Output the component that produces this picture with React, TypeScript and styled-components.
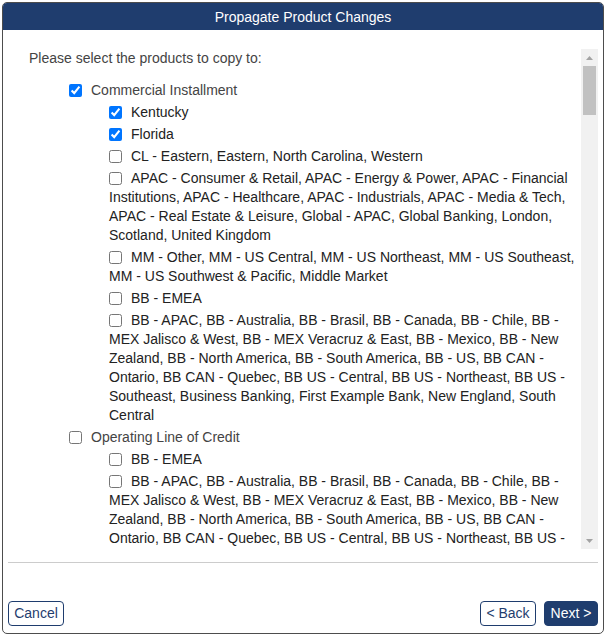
import React from "react";
import styled, { createGlobalStyle } from "styled-components";

const Global = createGlobalStyle`
  html, body { margin: 0; padding: 0; background: #ffffff; }
  body { font-family: "Liberation Sans", Arial, sans-serif; font-size: 14px; color: #333333; }
  * { box-sizing: border-box; }
`;

const Page = styled.div`
  width: 608px;
  height: 637px;
  padding: 2px 0 0 2px;
  background: #ffffff;
`;

const Dialog = styled.div`
  width: 602px;
  height: 632px;
  border: 1px solid #4d4d4d;
  border-radius: 5px;
  overflow: hidden;
  display: flex;
  flex-direction: column;
  background: #ffffff;
`;

const Header = styled.div`
  height: 27px;
  flex: none;
  background: #1f3d6e;
  color: #ffffff;
  font-size: 14px;
  display: flex;
  align-items: center;
  justify-content: center;
`;

const Body = styled.div`
  flex: 1;
  display: flex;
  flex-direction: column;
  padding: 19px 5px 7px 5px;
`;

const ScrollArea = styled.div`
  height: 500px;
  flex: none;
  display: flex;
`;

const Content = styled.div`
  flex: 1;
  min-width: 0;
  overflow: hidden;
  padding: 0 0 0 21px;
  line-height: 19px;
`;

const Track = styled.div`
  width: 17px;
  flex: none;
  background: #f1f1f1;
  display: flex;
  flex-direction: column;
`;

const Arrow = styled.div`
  height: 17px;
  flex: none;
  display: flex;
  align-items: center;
  justify-content: center;
`;

const ThumbRail = styled.div`
  flex: 1;
  padding: 0 2px;
`;

const Thumb = styled.div`
  height: 49px;
  background: #c1c1c1;
`;

const Intro = styled.div`
  line-height: 19px;
  color: #444444;
`;

const List = styled.ul<{ $nested?: boolean }>`
  list-style: none;
  margin: ${(p) => (p.$nested ? "3px 0 0 0" : "13px 0 0 0")};
  padding: 0 0 0 40px;
`;

const Item = styled.li<{ $strong?: boolean }>`
  margin: 0 0 3px 0;
  line-height: 19px;
  color: ${(p) => (p.$strong ? "#222222" : "#444444")};
`;

const Label = styled.label`
  cursor: pointer;
`;

const Box = styled.input.attrs({ type: "checkbox" })`
  width: 13px;
  height: 13px;
  margin: 0 9px 0 0;
  vertical-align: -2px;
`;

const Rule = styled.hr`
  border: none;
  border-top: 1px solid #cccccc;
  margin: 13px 0 0 0;
  height: 0;
`;

const Footer = styled.div`
  margin-top: auto;
  display: flex;
  align-items: center;
  gap: 8px;
`;

const Spacer = styled.div`
  flex: 1;
`;

const Button = styled.button<{ $primary?: boolean; $w: number }>`
  width: ${(p) => p.$w}px;
  height: 25px;
  padding: 0;
  border-radius: 4px;
  border: 1px solid #1f3d6e;
  background: ${(p) => (p.$primary ? "#1f3d6e" : "#ffffff")};
  color: ${(p) => (p.$primary ? "#ffffff" : "#1f3d6e")};
  font-family: "Liberation Sans", Arial, sans-serif;
  font-size: 14px;
  line-height: 23px;
  text-align: center;
  cursor: pointer;
`;

type Product = { name: string; checked?: boolean; children: { name: string; checked?: boolean }[] };

const CL = "CL - Eastern, Eastern, North Carolina, Western";
const APAC =
  "APAC - Consumer & Retail, APAC - Energy & Power, APAC - Financial Institutions, APAC - Healthcare, APAC - Industrials, APAC - Media & Tech, APAC - Real Estate & Leisure, Global - APAC, Global Banking, London, Scotland, United Kingdom";
const MM =
  "MM - Other, MM - US Central, MM - US Northeast, MM - US Southeast, MM - US Southwest & Pacific, Middle Market";
const EMEA = "BB - EMEA";
const BB =
  "BB - APAC, BB - Australia, BB - Brasil, BB - Canada, BB - Chile, BB - MEX Jalisco & West, BB - MEX Veracruz & East, BB - Mexico, BB - New Zealand, BB - North America, BB - South America, BB - US, BB CAN - Ontario, BB CAN - Quebec, BB US - Central, BB US - Northeast, BB US - Southeast, Business Banking, First Example Bank, New England, South Central";

const standard = [EMEA, BB, CL, APAC, MM].map((name) => ({ name }));

const products: Product[] = [
  {
    name: "Commercial Installment",
    checked: true,
    children: [
      { name: "Kentucky", checked: true },
      { name: "Florida", checked: true },
      { name: CL },
      { name: APAC },
      { name: MM },
      { name: EMEA },
      { name: BB },
    ],
  },
  { name: "Operating Line of Credit", children: standard },
  { name: "Term Loan", children: standard },
  { name: "Commercial Real Estate", children: standard },
];

const UpArrow = () => (
  <svg width="7" height="4" viewBox="0 0 7 4">
    <polygon points="0,4 3.5,0 7,4" fill="#a3a3a3" />
  </svg>
);

const DownArrow = () => (
  <svg width="7" height="4" viewBox="0 0 7 4">
    <polygon points="0,0 7,0 3.5,4" fill="#a3a3a3" />
  </svg>
);

export default function App() {
  return (
    <>
      <Global />
      <Page>
        <Dialog>
          <Header>Propagate Product Changes</Header>
          <Body>
            <ScrollArea>
              <Content>
                <Intro>Please select the products to copy to:</Intro>
                <List>
                  {products.map((p, i) => (
                    <Item key={i}>
                      <Label>
                        <Box defaultChecked={!!p.checked} />
                        {p.name}
                      </Label>
                      <List $nested>
                        {p.children.map((c, j) => (
                          <Item key={j} $strong>
                            <Label>
                              <Box defaultChecked={!!c.checked} />
                              {c.name}
                            </Label>
                          </Item>
                        ))}
                      </List>
                    </Item>
                  ))}
                </List>
              </Content>
              <Track>
                <Arrow>
                  <UpArrow />
                </Arrow>
                <ThumbRail>
                  <Thumb />
                </ThumbRail>
                <Arrow>
                  <DownArrow />
                </Arrow>
              </Track>
            </ScrollArea>
            <Rule />
            <Footer>
              <Button $w={56}>Cancel</Button>
              <Spacer />
              <Button $w={56}>&lt; Back</Button>
              <Button $w={54} $primary>
                Next &gt;
              </Button>
            </Footer>
          </Body>
        </Dialog>
      </Page>
    </>
  );
}
